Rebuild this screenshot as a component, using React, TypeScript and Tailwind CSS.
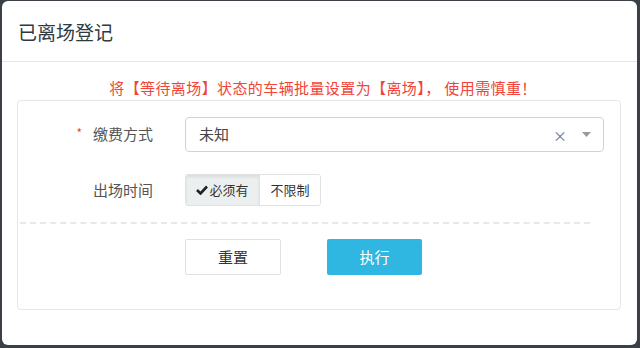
import React from "react";

export default function App() {
  const font = { fontFamily: '"Noto Sans CJK SC", "Noto Sans", sans-serif' };
  return (
    <div className="w-[640px] h-[348px] bg-[#3b4046] pt-[1px] pl-[2px] pr-[3px] pb-[3px]" style={font}>
      <div className="w-full h-full bg-white rounded-[6px] flex flex-col">
        <div className="h-[61px] border-b border-[#e5e5e5] flex items-center pl-[16px]">
          <span className="text-[19px] text-[#2f3a40] leading-none">已离场登记</span>
        </div>
        <div className="pt-[16px] pl-[15px] pr-[16px]">
          <div className="text-center text-[15px] leading-[20px] text-[#f0453a] pl-[8px] tracking-[0.4px] whitespace-pre">
            将【等待离场】状态的车辆批量设置为【离场】， 使用需慎重！
          </div>
          <div className="mt-[2px] h-[210px] border border-[#e2e7e7] rounded-[4px] pt-[16px]">
            <div className="flex items-center h-[35px]">
              <div className="w-[135px] flex justify-end items-center text-[15px] text-[#555]">
                <span className="text-[#f0453a] text-[12px] mr-[11px] mt-[-4px]">*</span>
                <span>缴费方式</span>
              </div>
              <div className="ml-[32px] w-[419px] h-[35px] border border-[#cfd3d5] rounded-[4px] flex items-center pl-[13px] pr-[12px] text-[15px] text-[#444]">
                <span className="flex-1">未知</span>
                <span className="text-[#777] text-[14px] mr-[15px] leading-none">×</span>
                <svg width="9" height="5" viewBox="0 0 9 5"><path d="M0 0 L9 0 L4.5 5 Z" fill="#999" /></svg>
              </div>
            </div>
            <div className="flex items-center h-[32px] mt-[22px]">
              <div className="w-[135px] flex justify-end text-[15px] text-[#555]">出场时间</div>
              <div className="ml-[32px] flex h-[32px] border border-[#dde2e3] rounded-[3px] overflow-hidden text-[13px] text-[#333]">
                <div className="w-[74px] bg-[#eceff0] flex items-center justify-center border-r border-[#dde2e3] shadow-[inset_0_2px_3px_rgba(0,0,0,0.08)]">
                  <svg width="12" height="10" viewBox="0 0 12 10" className="mr-[1px]"><path d="M1 5 L4.5 8.5 L11 1.5" stroke="#222" strokeWidth="2.6" fill="none" /></svg>
                  <span>必须有</span>
                </div>
                <div className="w-[60px] bg-white flex items-center justify-center">不限制</div>
              </div>
            </div>
            <div className="mt-[16px] ml-[2px] mr-[30px] border-t-2 border-dashed border-[#e6e9ea]"></div>
            <div className="flex mt-[15px] ml-[167px]">
              <div className="w-[96px] h-[36px] border border-[#dde2e3] rounded-[2px] flex items-center justify-center text-[15px] text-[#333]">重置</div>
              <div className="ml-[46px] w-[95px] h-[36px] bg-[#30b7e1] rounded-[2px] flex items-center justify-center text-[15px] text-white">执行</div>
            </div>
          </div>
        </div>
      </div>
    </div>
  );
}
